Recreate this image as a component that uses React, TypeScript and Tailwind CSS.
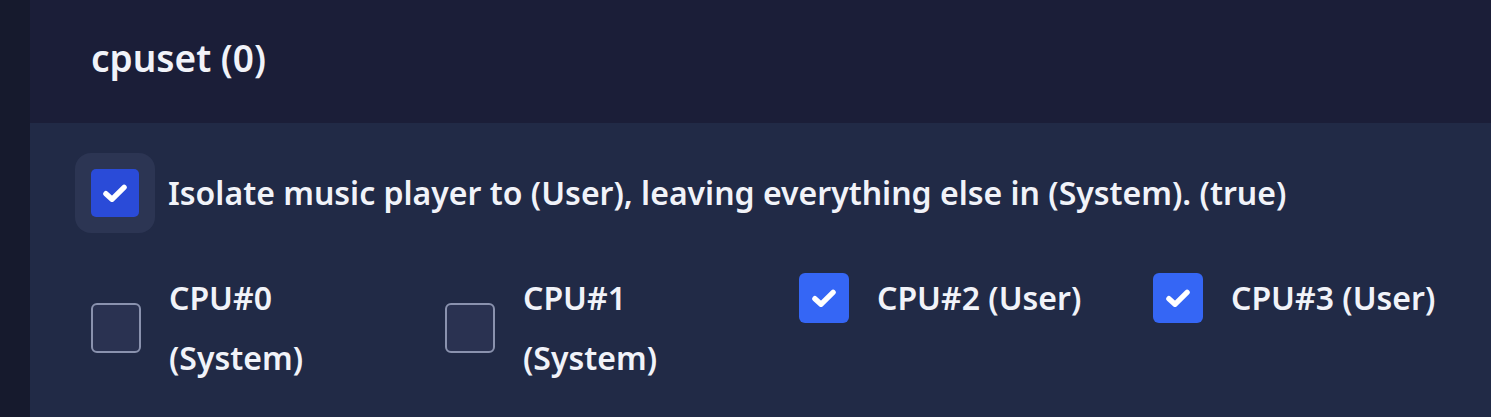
import React from "react";

const Check = ({ size = 28 }: { size?: number }) => (
  <svg width={size} height={size} viewBox="0 0 24 24" fill="none">
    <path d="M4.2 12.6 L9.4 17.4 L19.8 7.2" stroke="white" strokeWidth="4.6" strokeLinecap="round" strokeLinejoin="round" />
  </svg>
);

const items = [
  { label: "CPU#0 (System)", checked: false },
  { label: "CPU#1 (System)", checked: false },
  { label: "CPU#2 (User)", checked: true },
  { label: "CPU#3 (User)", checked: true },
];

export default function App() {
  return (
    <div
      className="flex h-[417px] w-[1491px] overflow-hidden bg-[#161a2d] text-[#f1f3f9]"
      style={{ fontFamily: '"Noto Sans", "Open Sans", sans-serif' }}
    >
      <div className="w-[30px] shrink-0" />
      <div className="flex flex-1 flex-col">
        <div className="flex h-[123px] shrink-0 items-center bg-[#1b1e38] pb-[8px] pl-[61px]">
          <span className="text-[37px] font-semibold">cpuset (0)</span>
        </div>
        <div className="flex-1 bg-[#212a46] pl-[45px] pt-[30px]">
          <div className="flex items-center">
            <div className="flex h-[80px] w-[80px] items-center justify-center rounded-[16px] bg-[#2c3553]">
              <div className="flex h-[48px] w-[48px] items-center justify-center rounded-[5px] bg-[#2a4bd8]">
                <Check />
              </div>
            </div>
            <span className="ml-[13px] whitespace-nowrap text-[32px] font-semibold leading-[40px]">
              Isolate music player to (User), leaving everything else in (System). (true)
            </span>
          </div>
          <div className="mt-[35px] grid grid-cols-[repeat(4,354px)] items-start">
            {items.map((it) => (
              <div key={it.label} className="flex items-center pl-[16px]">
                {it.checked ? (
                  <div className="flex h-[50px] w-[50px] shrink-0 items-center justify-center rounded-[6px] bg-[#3566f5]">
                    <Check />
                  </div>
                ) : (
                  <div className="h-[50px] w-[50px] shrink-0 rounded-[6px] border-2 border-[#8a92ae] bg-[#2a3251]" />
                )}
                <span className="ml-[28px] max-w-[232px] text-[32px] font-semibold leading-[60px]">{it.label}</span>
              </div>
            ))}
          </div>
        </div>
      </div>
    </div>
  );
}
